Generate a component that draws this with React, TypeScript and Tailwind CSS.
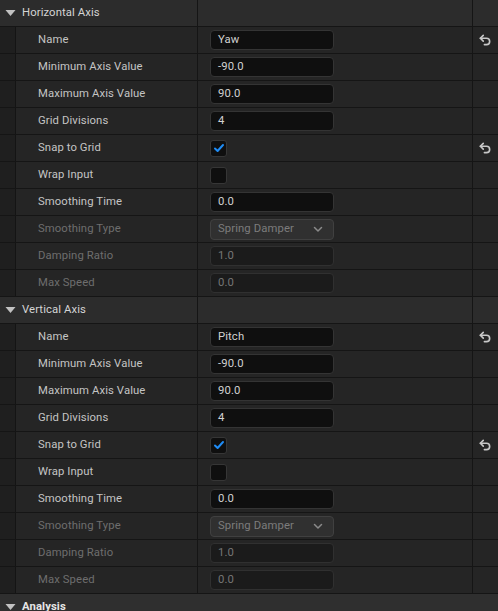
import React from "react";

type Row = {
    label: string;
    kind: "text" | "check" | "dropdown";
    value?: string;
    checked?: boolean;
    disabled?: boolean;
    reset?: boolean;
};

const horizontal: Row[] = [
    { label: "Name", kind: "text", value: "Yaw", reset: true },
    { label: "Minimum Axis Value", kind: "text", value: "-90.0" },
    { label: "Maximum Axis Value", kind: "text", value: "90.0" },
    { label: "Grid Divisions", kind: "text", value: "4" },
    { label: "Snap to Grid", kind: "check", checked: true, reset: true },
    { label: "Wrap Input", kind: "check", checked: false },
    { label: "Smoothing Time", kind: "text", value: "0.0" },
    { label: "Smoothing Type", kind: "dropdown", value: "Spring Damper", disabled: true },
    { label: "Damping Ratio", kind: "text", value: "1.0", disabled: true },
    { label: "Max Speed", kind: "text", value: "0.0", disabled: true },
];

const vertical: Row[] = horizontal.map((r) => (r.label === "Name" ? { ...r, value: "Pitch" } : r));

function ResetIcon() {
    return (
        <svg width="14" height="14" viewBox="0 0 24 24" fill="none" stroke="#c8c8c8" strokeWidth="2.8" strokeLinecap="round" strokeLinejoin="round">
            <path d="M9 14 4 9l5-5" />
            <path d="M4 9h10.5a5.5 5.5 0 0 1 0 11H11" />
        </svg>
    );
}

function Value({ row }: { row: Row }) {
    if (row.kind === "check") {
        return (
            <div className="w-[17px] h-[17px] rounded-[3px] bg-[#0f0f0f] border border-[#363636] flex items-center justify-center">
                {row.checked && (
                    <svg width="12" height="12" viewBox="0 0 12 12" fill="none" stroke="#1f8cf5" strokeWidth="2" strokeLinecap="round" strokeLinejoin="round">
                        <path d="M2 6.5 4.6 9 10 3" />
                    </svg>
                )}
            </div>
        );
    }
    if (row.kind === "dropdown") {
        return (
            <div className="w-[124px] h-[21px] rounded-[4px] bg-[#303030] border border-[#404040] flex items-center justify-between pl-[7px] pr-[10px] pb-[1px] text-[#7c7c7c]">
                <span>{row.value}</span>
                <svg width="10" height="10" viewBox="0 0 10 10" fill="none" stroke="#8a8a8a" strokeWidth="1.5" strokeLinecap="round" strokeLinejoin="round">
                    <path d="M1.5 3.5 5 7l3.5-3.5" />
                </svg>
            </div>
        );
    }
    return (
        <div
            className={
                row.disabled
                    ? "w-[124px] h-[20px] rounded-[4px] bg-[#1b1b1b] border border-[#303030] flex items-center pl-[7px] pb-[1px] text-[#767676]"
                    : "w-[124px] h-[20px] rounded-[4px] bg-[#0f0f0f] border border-[#343434] flex items-center pl-[7px] pb-[1px] text-[#d2d2d2]"
            }
        >
            {row.value}
        </div>
    );
}

function PropRow({ row }: { row: Row }) {
    return (
        <div className="flex h-[27px] border-b border-[#151515] bg-[#252525]">
            <div className="w-[16px] shrink-0 bg-[#1f1f1f] border-r border-[#141414]" />
            <div
                className={
                    row.disabled
                        ? "w-[182px] shrink-0 border-r border-[#151515] flex items-center pl-[22px] pb-[1px] text-[#6e6e6e]"
                        : "w-[182px] shrink-0 border-r border-[#151515] flex items-center pl-[22px] pb-[1px] text-[#c4c4c4]"
                }
            >
                {row.label}
            </div>
            <div className="w-[275px] shrink-0 border-r border-[#151515] flex items-center pl-[12px]">
                <Value row={row} />
            </div>
            <div className="flex-1 flex items-center justify-center pr-[2px]">{row.reset && <ResetIcon />}</div>
        </div>
    );
}

function Header({ title, plain }: { title: string; plain?: boolean }) {
    return (
        <div className={plain ? "flex h-[27px] bg-[#2f2f2f]" : "flex h-[27px] border-b border-[#151515] bg-[#2c2c2c]"}>
            <div className={plain ? "w-[198px] shrink-0 flex items-center pb-[1px]" : "w-[198px] shrink-0 border-r border-[#151515] flex items-center pb-[1px]"}>
                <svg width="11" height="8" viewBox="0 0 11 8" className="ml-[5px] mr-[6px]">
                    <path d="M0.5 1 10.5 1 5.5 7z" fill="#c2c2c2" />
                </svg>
                <span className={plain ? "text-[#e6e6e6] font-bold" : "text-[#d4d4d4]"}>{title}</span>
            </div>
            {!plain && <div className="w-[275px] shrink-0 border-r border-[#151515]" />}
            <div className="flex-1" />
        </div>
    );
}

export default function App() {
    return (
        <div className="w-[498px] h-[611px] overflow-hidden bg-[#252525] text-[11.3px] leading-none tracking-[0.1px]" style={{ fontFamily: "Roboto, 'Noto Sans', sans-serif" }}>
            <Header title="Horizontal Axis" />
            {horizontal.map((r) => (
                <PropRow key={"h" + r.label} row={r} />
            ))}
            <Header title="Vertical Axis" />
            {vertical.map((r) => (
                <PropRow key={"v" + r.label} row={r} />
            ))}
            <Header title="Analysis" plain />
        </div>
    );
}
